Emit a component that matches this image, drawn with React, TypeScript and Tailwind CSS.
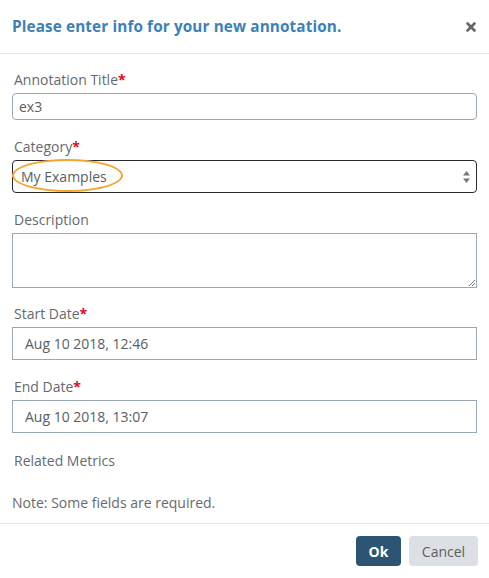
import { X } from 'lucide-react'

// Annotation dialog: header, form fields, footer with Ok / Cancel.

function Label({ text, required }: { text: string; required?: boolean }) {
  return (
    <div className="pl-[2px] text-[14px] leading-[20px] text-[#666a6e]">
      {text}
      {required && <span className="font-bold text-[#e0081e]">*</span>}
    </div>
  )
}

export default function App() {
  return (
    <div
      className="flex h-[578px] w-[489px] flex-col bg-white"
      style={{ fontFamily: '"Open Sans", "Noto Sans", sans-serif' }}
    >
      <header className="flex h-[54px] shrink-0 items-center justify-between border-b border-[#e5e5e5] pl-[12px] pr-[11px]">
        <h1 className="text-[15.3px] font-bold tracking-[0.12px] text-[#3b81b8]">
          Please enter info for your new annotation.
        </h1>
        <X className="size-[14px] text-[#666]" strokeWidth={4.5} />
      </header>

      <div className="flex flex-1 flex-col px-[12px] pt-[16px]">
        <Label text="Annotation Title" required />
        <div className="mt-[3px] flex h-[27px] items-center rounded-[4px] border border-[#9aa8b5] pl-[6px] text-[14px] text-[#5a5e62]">
          ex3
        </div>

        <div className="mt-[17px]">
          <Label text="Category" required />
        </div>
        <div className="relative mt-[3px] flex h-[33px] items-center justify-between rounded-[4px] border border-[#2a2a2a] pl-[8px] pr-[6px] text-[14px] text-[#5a5e62]">
          <span>My Examples</span>
          <svg width="7" height="12" viewBox="0 0 7 12" className="text-[#777]">
            <path d="M3.5 0 L7 4.6 H0 Z" fill="currentColor" />
            <path d="M3.5 12 L7 7.4 H0 Z" fill="currentColor" />
          </svg>
          <div className="pointer-events-none absolute left-[-1px] top-[-2px] h-[33px] w-[111px] rounded-[50%] border-2 border-[#f3a530]" />
        </div>

        <div className="mt-[17px]">
          <Label text="Description" />
        </div>
        <div className="relative mt-[3px] h-[55px] border border-[#9aa8b5]">
          <svg width="7" height="7" viewBox="0 0 7 7" className="absolute bottom-[1px] right-[1px]">
            <path d="M1 7 L7 1 M4 7 L7 4" stroke="#777" strokeWidth="1" />
          </svg>
        </div>

        <div className="mt-[16px]">
          <Label text="Start Date" required />
        </div>
        <div className="mt-[3px] flex h-[33px] items-center border border-[#9aa8b5] pl-[12px] text-[14px] text-[#5a5e62]">
          Aug 10 2018, 12:46
        </div>

        <div className="mt-[17px]">
          <Label text="End Date" required />
        </div>
        <div className="mt-[3px] flex h-[33px] items-center border border-[#9aa8b5] pl-[12px] text-[14px] text-[#5a5e62]">
          Aug 10 2018, 13:07
        </div>

        <div className="mt-[18px]">
          <Label text="Related Metrics" />
        </div>

        <div className="mt-[22px] text-[14px] leading-[20px] text-[#666a6e]">
          Note: Some fields are required.
        </div>
      </div>

      <footer className="flex h-[55px] shrink-0 items-center justify-end gap-[8px] border-t border-[#e5e5e5] pr-[11px]">
        <button className="h-[30px] w-[45px] rounded-[4px] bg-[#2e5473] text-[14px] font-bold text-white">
          Ok
        </button>
        <button className="h-[30px] w-[69px] rounded-[4px] bg-[#dce0e4] text-[14px] text-[#5a5e62]">
          Cancel
        </button>
      </footer>
    </div>
  )
}
